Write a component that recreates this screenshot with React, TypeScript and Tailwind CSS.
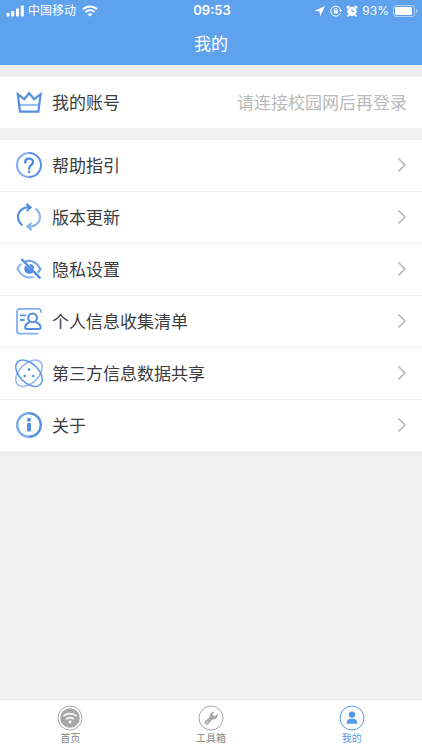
import React, { useState } from 'react';

const CrownIcon = () => (
  <svg viewBox="0 0 28 28" className="w-7 h-7 shrink-0" fill="none" strokeWidth="2.2" aria-hidden="true">
    <path d="M4.600 17H23.400" stroke="#8db6ef" strokeWidth="1.800" />
    <path d="M2.800 6.200 9.200 11.200 14.200 5.200 19.200 11.200 25.600 6.200 23.400 23.600H5Z" stroke="#5590e0" />
  </svg>
);

const HelpIcon = () => (
  <svg viewBox="0 0 28 28" className="w-7 h-7 shrink-0" fill="none" strokeWidth="2" aria-hidden="true">
    <path d="M14 2a12 12 0 0 1 0 24" stroke="#5a92e2" />
    <path d="M14 26a12 12 0 0 1 0-24" stroke="#7fadee" />
    <path d="M10.200 11.400c0-2.400 1.700-3.800 3.900-3.800s3.900 1.400 3.900 3.500c0 2.800-3.800 3-3.800 6.400" stroke="#4f8be0" strokeWidth="2.400" strokeLinecap="round" />
    <circle cx="14.100" cy="20.800" r="1.400" fill="#4f8be0" />
  </svg>
);

const UpdateIcon = () => (
  <svg viewBox="0 0 28 28" className="w-7 h-7 shrink-0" fill="none" strokeWidth="2.200" aria-hidden="true">
    <path d="M7.600 22.400A10.800 10.800 0 0 1 3 14C3 8.200 7.600 4 15 4.200" stroke="#5590e0" />
    <path d="M11.400.8 15.600 4.400 11.600 8" stroke="#5590e0" />
    <path d="M20.400 5.600A10.800 10.800 0 0 1 25 14c0 5.800-4.600 10-12 9.800" stroke="#8db6ef" />
    <path d="M16.600 20 12.400 23.600l4.200 3.600" stroke="#8db6ef" />
  </svg>
);

const PrivacyIcon = () => (
  <svg viewBox="0 0 28 28" className="w-7 h-7 shrink-0" fill="none" strokeWidth="2.200" aria-hidden="true">
    <path d="M10.400 6.200C17.400 4.400 22.800 8.600 25.400 14c-.7 1.400-1.600 2.600-2.600 3.600" stroke="#6da0e8" />
    <path d="M6 8.800C4.600 10.200 3.400 12 2.600 14c3 6 8.800 9.800 16 8" stroke="#8db6ef" />
    <path d="M10.600 10.400a4.800 4.800 0 0 0 7.400 6.800Z" fill="#4f8be0" />
    <path d="M14.800 10.200a3.600 3.600 0 0 1 3.400 3.600" stroke="#4f8be0" />
    <path d="M6.400 4 25.400 23.400" stroke="#4f8be0" strokeWidth="2.400" />
  </svg>
);

const ListIcon = () => (
  <svg viewBox="0 0 28 28" className="w-7 h-7 shrink-0" fill="none" strokeWidth="1.800" aria-hidden="true">
    <path d="M26 5.800V4.400A2.600 2.600 0 0 0 23.400 1.800H4.600A2.600 2.600 0 0 0 2 4.400v19.600a2.600 2.600 0 0 0 2.600 2.600h18.800" stroke="#82aff0" />
    <path d="M5 8.400h6.400M5 13h4.600" stroke="#5590e0" />
    <circle cx="17.600" cy="10.800" r="4.400" stroke="#4f8be0" strokeWidth="2" />
    <path d="M14.800 15c-2.800 1-4.600 3-4.600 5.800 0 .9.4 1.200 1.200 1.200h13c.8 0 1.200-.4 1.200-1.200 0-2.800-2-4.800-5-5.800" stroke="#4f8be0" strokeWidth="2" />
  </svg>
);

const ShareIcon = () => (
  <svg viewBox="0 0 28 28" className="w-7 h-7 shrink-0 overflow-visible" fill="none" strokeWidth="1.500" aria-hidden="true">
    <ellipse cx="14" cy="14.200" rx="16" ry="9.600" transform="rotate(-45 14 14.2)" stroke="#91b9f2" />
    <ellipse cx="14" cy="14.200" rx="16" ry="9.600" transform="rotate(45 14 14.2)" stroke="#6199e6" />
    <g fill="#5590e0">
      <circle cx="14" cy="10.600" r="1.300" />
      <circle cx="9.800" cy="17" r="1.300" />
      <circle cx="18.200" cy="17" r="1.300" />
    </g>
  </svg>
);

const AboutIcon = () => (
  <svg viewBox="0 0 28 28" className="w-7 h-7 shrink-0" fill="none" strokeWidth="2.400" aria-hidden="true">
    <path d="M14 2.200a11.800 11.800 0 0 1 0 23.600" stroke="#5590e0" />
    <path d="M14 25.800a11.800 11.800 0 0 1 0-23.600" stroke="#7babed" />
    <circle cx="14" cy="8.800" r="2" fill="#5590e0" />
    <rect x="12" y="12" width="4" height="8.600" rx="1" fill="#5590e0" />
  </svg>
);

const Chevron = () => (
  <svg viewBox="0 0 10 16" className="w-2.5 h-4 shrink-0" fill="none" stroke="#b4b4b4" strokeWidth="1.500" aria-hidden="true">
    <path d="M1.500 1.500 8 8l-6.500 6.500" />
  </svg>
);

const HomeTabIcon = () => (
  <svg viewBox="0 0 26 26" className="w-[26px] h-[26px]" fill="none" aria-hidden="true">
    <circle cx="13" cy="13" r="12" stroke="currentColor" />
    <circle cx="13" cy="13" r="9.800" fill="currentColor" />
    <path d="M6.400 11.200c3.800-3.400 9.400-3.400 13.200 0M9 14.200c2.400-2 5.600-2 8 0" stroke="#fff" strokeWidth="1.700" />
    <circle cx="13" cy="17" r="1.400" fill="#fff" />
  </svg>
);

const ToolTabIcon = () => (
  <svg viewBox="0 0 26 26" className="w-[26px] h-[26px]" fill="none" aria-hidden="true">
    <circle cx="13" cy="13" r="12" stroke="currentColor" />
    <path d="M16.800 6.800a4.600 4.600 0 0 0-5.200 5.400L7.200 16a2.100 2.100 0 0 0 3 3l4.200-4.500a4.600 4.600 0 0 0 5.200-5.700l-2.600 2.400-2.200-.6-.5-1.700Z" fill="currentColor" />
    <circle cx="8.900" cy="17.300" r="0.700" fill="#fff" />
  </svg>
);

const MineTabIcon = () => (
  <svg viewBox="0 0 26 26" className="w-[26px] h-[26px]" fill="none" aria-hidden="true">
    <circle cx="13" cy="13" r="12" stroke="currentColor" />
    <circle cx="13" cy="9.600" r="3.200" fill="currentColor" />
    <path d="M7.800 18.800v-1.300c0-2.200 1.600-3.700 3.700-3.700h3c2.100 0 3.700 1.500 3.700 3.700v1.300Z" fill="currentColor" />
  </svg>
);

const MENU = [
  { label: '帮助指引', Icon: HelpIcon },
  { label: '版本更新', Icon: UpdateIcon },
  { label: '隐私设置', Icon: PrivacyIcon },
  { label: '个人信息收集清单', Icon: ListIcon },
  { label: '第三方信息数据共享', Icon: ShareIcon },
  { label: '关于', Icon: AboutIcon },
];

const TABS = [
  { label: '首页', Icon: HomeTabIcon },
  { label: '工具箱', Icon: ToolTabIcon },
  { label: '我的', Icon: MineTabIcon },
];

const StatusBar = () => (
  <div className="grid grid-cols-[1fr_auto_1fr] items-center h-[21px] pl-1.5 pr-1 pt-px">
    <div className="flex items-center gap-1 text-xs">
      <svg viewBox="0 0 18 12" className="w-[18px] h-3" fill="currentColor" aria-hidden="true">
        <rect x="0.500" y="8" width="3" height="3.500" rx="0.800" />
        <rect x="5.200" y="6" width="3" height="5.500" rx="0.800" />
        <rect x="10" y="3.500" width="3" height="8" rx="0.800" />
        <rect x="14.800" y="0.500" width="3" height="11" rx="0.800" />
      </svg>
      <span>中国移动</span>
      <svg viewBox="0 0 16 12" className="ml-0.5 w-4 h-3" fill="none" stroke="currentColor" aria-hidden="true">
        <path d="M1 4.300c4-3.900 10-3.900 14 0M3.500 7c2.600-2.500 6.400-2.500 9 0" strokeWidth="2" />
        <path d="M5.600 9.200c1.400-1.300 3.400-1.300 4.800 0L8 11.600Z" fill="currentColor" stroke="none" />
      </svg>
    </div>
    <span className="text-[13px] font-semibold">09:53</span>
    <div className="flex items-center justify-end gap-1 text-xs">
      <svg viewBox="0 0 12 12" className="w-3 h-3" fill="currentColor" aria-hidden="true">
        <path d="M11 1 .8 5.800l4.800.6.600 4.800Z" />
      </svg>
      <svg viewBox="0 0 12 12" className="w-3 h-3" fill="none" stroke="currentColor" aria-hidden="true">
        <path d="M10.200 8.400A5 5 0 1 1 10.600 5" />
        <path d="M9 5h3.200l-1.600 2Z" fill="currentColor" stroke="none" />
        <rect x="3.800" y="5.400" width="4" height="3.200" fill="currentColor" stroke="none" />
        <path d="M4.600 5.600V4.400a1.200 1.200 0 0 1 2.400 0v1.200" />
      </svg>
      <svg viewBox="0 0 12 12" className="w-3 h-3" fill="none" stroke="currentColor" aria-hidden="true">
        <circle cx="6" cy="6.300" r="4.200" fill="currentColor" />
        <path d="M1 3 3.200 1M11 3 8.800 1M3 9.800l-1.300 1.600M9 9.800l1.300 1.600" strokeWidth="1.800" />
        <path d="M6 3.800v2.700h2" stroke="#5ea2ee" />
      </svg>
      <span>93%</span>
      <svg viewBox="0 0 25 12" className="w-[25px] h-3" fill="none" aria-hidden="true">
        <rect x="0.500" y="0.500" width="21" height="11" rx="2.500" stroke="#fff" strokeOpacity="0.5" />
        <rect x="2" y="2" width="17" height="8" rx="1.200" fill="#fff" />
        <path d="M23 4v4c.9-.3 1.500-1.100 1.500-2S23.900 4.300 23 4Z" fill="#fff" fillOpacity="0.5" />
      </svg>
    </div>
  </div>
);

export default function App() {
  const [activeTab, setActiveTab] = useState('我的');

  return (
    <div className="min-h-screen flex flex-col bg-[#f0f0f0] text-[#3c3c3e] font-['Inter','Noto_Sans_CJK_SC',sans-serif]">
      <header className="bg-[#5ea2ee] text-white pb-2">
        <StatusBar />
        <h1 className="h-9 flex items-center justify-center pt-2 text-[17px] font-['Noto_Sans_CJK_SC',sans-serif]">我的</h1>
      </header>

      <main className="flex-1 pt-3 font-['Noto_Sans_CJK_SC',sans-serif]">
        <button type="button" className="w-full h-[51px] flex items-center bg-white px-[15px] pb-px text-[17px]">
          <CrownIcon />
          <span className="ml-[9px]">我的账号</span>
          <span className="ml-auto text-[#bababa]">请连接校园网后再登录</span>
        </button>

        <nav className="mt-3 bg-white divide-y divide-[#f0f0f0]">
          {MENU.map(({ label, Icon }) => (
            <a key={label} href="#" className="h-[52px] last:h-[51px] flex items-center px-[15px] pb-px text-[17px]">
              <Icon />
              <span className="ml-[9px]">{label}</span>
              <span className="ml-auto flex"><Chevron /></span>
            </a>
          ))}
        </nav>
      </main>

      <footer className="grid grid-cols-3 h-[51px] bg-white border-t border-[#e9e9e9]">
        {TABS.map(({ label, Icon }) => (
          <button
            key={label}
            type="button"
            onClick={() => setActiveTab(label)}
            className={`flex flex-col items-center pt-[5px] ${activeTab === label ? 'text-[#559ae6]' : 'text-[#a8a8a8]'}`}
          >
            <Icon />
            <span className={`text-[10px] leading-[14px] ${activeTab === label ? '' : 'text-[#858585]'}`}>{label}</span>
          </button>
        ))}
      </footer>
    </div>
  );
}
